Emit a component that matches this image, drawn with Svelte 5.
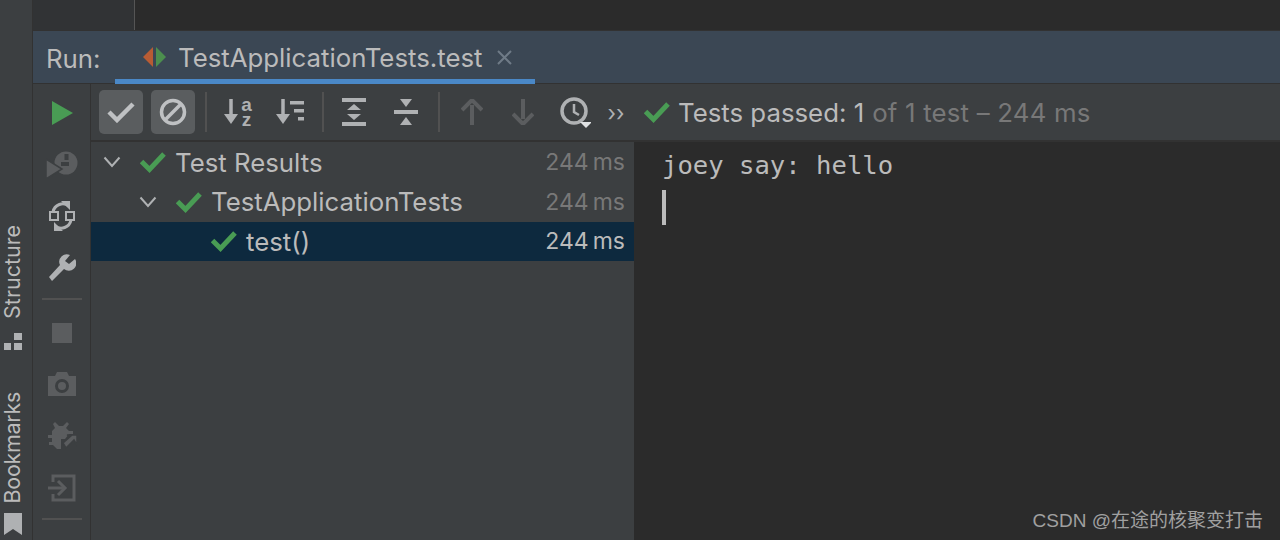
<script>
	const rows = [
		{ name: 'Test Results', depth: 0, arrow: true },
		{ name: 'TestApplicationTests', depth: 1, arrow: true },
		{ name: 'test()', depth: 2, arrow: false, selected: true }
	]
</script>

{#snippet check(size)}
	<svg class="check" width={size} height={size} viewBox="0 0 26 26">
		<path d="M1.5 12.5 L9.5 20.5 L24 5" fill="none" stroke="#499c54" stroke-width="5" />
	</svg>
{/snippet}

<div class="ide">
	<aside class="stripes">
		<div class="stripe structure">
			<span>Structure</span>
			<svg width="20" height="18" viewBox="0 0 20 18" fill="#afb1b3">
				<rect x="2" y="11" width="7" height="7" />
				<rect x="12" y="11" width="8" height="7" />
				<rect x="12" y="1" width="8" height="7" />
			</svg>
		</div>
		<div class="stripe bookmarks">
			<span>Bookmarks</span>
			<svg width="20" height="22" viewBox="0 0 20 22" fill="#afb1b3">
				<path d="M2 0 H20 V22 L11 16 L2 22 Z" />
			</svg>
		</div>
	</aside>

	<main class="main">
		<div class="editor">
			<div class="gutter"></div>
		</div>

		<header class="runbar">
			<span class="run-label">Run:</span>
			<div class="tab">
				<svg width="24" height="20" viewBox="0 0 24 20">
					<path d="M10 0 V20 L0 10 Z" fill="#b85c34" />
					<path d="M13 0 V20 L23 10 Z" fill="#4c8f4e" />
				</svg>
				<span class="tab-name">TestApplicationTests.test</span>
				<svg class="close" width="15" height="15" viewBox="0 0 15 15">
					<path d="M1 1 L14 14 M14 1 L1 14" stroke="#6f7b87" stroke-width="2" />
				</svg>
			</div>
		</header>

		<div class="panel">
			<nav class="actions">
				<button class="act">
					<svg width="22" height="24" viewBox="0 0 22 24"><path d="M1 0 L22 12 L1 24 Z" fill="#499c54" /></svg>
				</button>
				<button class="act">
					<svg width="32" height="28" viewBox="0 0 32 28" fill="#5b5d5f">
						<circle cx="20" cy="12" r="11.5" />
						<path d="M0 8 L16 18 L0 28 Z" stroke="#3c3f41" stroke-width="1.5" />
						<rect x="18.5" y="3" width="4" height="6" fill="#3c3f41" />
						<path d="M15 11 H23 V15 H15 Z" fill="#3c3f41" />
					</svg>
				</button>
				<button class="act">
					<svg width="26" height="32" viewBox="0 0 26 32">
						<path d="M4 12 A 10 10 0 0 1 20 6 M22 20 A 10 10 0 0 1 6 26" fill="none" stroke="#afb1b3" stroke-width="3" />
						<path d="M12 1 L21 1 L21 10 Z M14 31 L5 31 L5 22 Z" fill="#afb1b3" />
						<rect x="1" y="12" width="8" height="8" fill="#3c3f41" stroke="#afb1b3" stroke-width="2" />
						<rect x="17" y="12" width="8" height="8" fill="#3c3f41" stroke="#afb1b3" stroke-width="2" />
					</svg>
				</button>
				<button class="act">
					<svg width="28" height="28" viewBox="0 0 28 28">
						<path d="M1 23 L4 27 L16 15 A 7.5 7.5 0 0 0 27 5 L21 10 L17 7 L22 1 A 7.5 7.5 0 0 0 12 11 Z" fill="#afb1b3" />
					</svg>
				</button>
				<hr class="act-sep" />
				<button class="act">
					<svg width="20" height="20" viewBox="0 0 20 20"><rect width="20" height="20" fill="#5b5d5f" /></svg>
				</button>
				<button class="act">
					<svg width="28" height="24" viewBox="0 0 28 24">
						<path d="M0 4 H7 L9 0 H19 L21 4 H28 V24 H0 Z" fill="#5b5d5f" />
						<circle cx="14" cy="14" r="5.5" fill="none" stroke="#3c3f41" stroke-width="3" />
					</svg>
				</button>
				<button class="act">
					<svg width="30" height="30" viewBox="0 0 30 30" fill="#5b5d5f">
						<path d="M8 1 L12 5 H16 L20 1 L22 3 L19 7 L22 10 H26 V13 H22 L18 18 L14 18 L14 28 L10 28 L6 24 H2 V21 H5 V17 H1 V14 H5 V10 L8 7 L6 3 Z" />
						<path d="M16 22 L24 15 L20 14 H30 V24 L27 19 L19 27 Z" stroke="#3c3f41" stroke-width="1.5" />
					</svg>
				</button>
				<button class="act">
					<svg width="28" height="28" viewBox="0 0 28 28" fill="none" stroke="#5b5d5f" stroke-width="3">
						<path d="M5 8 V2 H26 V26 H5 V20" />
						<path d="M0 14 H16" />
						<path d="M10 7 L17 14 L10 21" />
					</svg>
				</button>
				<hr class="act-sep second" />
			</nav>

			<div class="content">
				<div class="toolbar">
					<button class="tool on">
						<svg width="28" height="22" viewBox="0 0 28 22"><path d="M2 11 L10 19 L26 3" fill="none" stroke="#bfc1c3" stroke-width="4.5" /></svg>
					</button>
					<button class="tool on">
						<svg width="28" height="28" viewBox="0 0 28 28" fill="none" stroke="#bfc1c3" stroke-width="3.5">
							<circle cx="14" cy="14" r="11.5" />
							<path d="M6 22 L22 6" />
						</svg>
					</button>
					<hr class="sep first" />
					<button class="tool">
						<svg width="15" height="26" viewBox="0 0 15 26" fill="#afb1b3">
							<path d="M7 0 V18" stroke="#afb1b3" stroke-width="3.5" />
							<path d="M0 15 H14 L7 25 Z" />
						</svg>
						<span class="sort">a
z</span>
					</button>
					<button class="tool">
						<svg width="28" height="26" viewBox="0 0 28 26" fill="#afb1b3">
							<path d="M7 0 V18" stroke="#afb1b3" stroke-width="3.5" />
							<path d="M0 15 H14 L7 25 Z" />
							<rect x="14" y="2" width="14" height="3.5" />
							<rect x="18" y="10" width="10" height="3.5" />
							<rect x="22" y="18" width="6" height="3.5" />
						</svg>
					</button>
					<hr class="sep" />
					<button class="tool">
						<svg width="26" height="28" viewBox="0 0 26 28" fill="#afb1b3">
							<rect width="24" height="4" x="1" y="0" />
							<rect width="24" height="4" x="1" y="24" />
							<path d="M13 6 L20 12 H6 Z M13 22 L20 16 H6 Z" />
						</svg>
					</button>
					<button class="tool">
						<svg width="26" height="28" viewBox="0 0 26 28" fill="#afb1b3">
							<rect width="24" height="4" x="1" y="12" />
							<path d="M7 1 H19 L13 9 Z M7 27 H19 L13 19 Z" />
						</svg>
					</button>
					<hr class="sep last" />
					<button class="tool">
						<svg width="22" height="26" viewBox="0 0 22 26">
							<path d="M11 26 V6" stroke="#5b5d5f" stroke-width="4" />
							<path d="M1 11 L11 1 L21 11" fill="none" stroke="#5b5d5f" stroke-width="4" />
						</svg>
					</button>
					<button class="tool down">
						<svg width="22" height="26" viewBox="0 0 22 26">
							<path d="M11 0 V20" stroke="#5b5d5f" stroke-width="4" />
							<path d="M1 15 L11 25 L21 15" fill="none" stroke="#5b5d5f" stroke-width="4" />
						</svg>
					</button>
					<button class="tool">
						<svg width="32" height="32" viewBox="0 0 32 32" fill="none" stroke="#afb1b3">
							<circle cx="15" cy="15" r="12" stroke-width="3.5" />
							<path d="M15 8 V16 L20 19" stroke-width="2.5" />
							<path d="M21 26 H33 L27 32 Z" fill="#dfe1e3" stroke="none" />
						</svg>
					</button>
					<span class="more">››</span>
					<div class="status">
						{@render check(26)}
						<span class="passed">Tests passed: 1</span>
						<span class="dim">of 1 test – 244 ms</span>
					</div>
				</div>

				<div class="split">
					<ul class="tree">
						{#each rows as row}
							<li class="row depth-{row.depth}" class:selected={row.selected}>
								{#if row.arrow}
									<svg class="arrow" width="18" height="12" viewBox="0 0 18 12">
										<path d="M1.5 1.5 L9 10 L16.5 1.5" fill="none" stroke="#afb1b3" stroke-width="2" />
									</svg>
								{/if}
								{@render check(26)}
								<span class="name">{row.name}</span>
								<span class="time">244<i>ms</i></span>
							</li>
						{/each}
					</ul>

					<div class="console">
						<div class="line">joey say: hello</div>
						<div class="caret"></div>
					</div>
				</div>
			</div>
		</div>
	</main>

	<div class="watermark">CSDN @在途的核聚变打击</div>
</div>

<style>
	:global(body) {
		background: #2b2b2b;
	}
	.ide {
		position: relative;
		display: flex;
		width: 1280px;
		height: 540px;
		overflow: hidden;
		font-family: Inter, "Liberation Sans", sans-serif;
		font-size: 25.8px;
		color: #bbbbbb;
		background: #2b2b2b;
	}
	button {
		display: flex;
		align-items: center;
		justify-content: center;
		padding: 0;
		border: 0;
		background: none;
	}
	hr {
		margin: 0;
		border: 0;
	}

	.stripes {
		flex: none;
		display: flex;
		flex-direction: column;
		align-items: flex-start;
		width: 30px;
		padding: 225px 0 0 2px;
		background: #3c3f41;
		border-right: 1px solid #323232;
	}
	.stripe {
		display: flex;
		flex-direction: column;
		align-items: flex-start;
		gap: 13px;
	}
	.stripe span {
		writing-mode: vertical-rl;
		transform: rotate(180deg);
		font-size: 21.5px;
		line-height: 20px;
	}
	.bookmarks {
		margin-top: 42px;
		gap: 10px;
	}
	.bookmarks span {
		letter-spacing: -0.3px;
	}

	.main {
		flex: 1;
		display: flex;
		flex-direction: column;
		min-width: 0;
	}
	.editor {
		flex: none;
		height: 31px;
		border-bottom: 1px solid #323232;
		box-sizing: border-box;
	}
	.gutter {
		width: 101px;
		height: 100%;
		background: #313335;
		border-right: 1px solid #555555;
	}

	.runbar {
		flex: none;
		display: flex;
		align-items: stretch;
		height: 53px;
		box-sizing: border-box;
		background: #3b4754;
		border-bottom: 1px solid #323232;
	}
	.run-label {
		width: 82px;
		padding-left: 13px;
		box-sizing: border-box;
		line-height: 55px;
	}
	.tab {
		display: flex;
		align-items: center;
		width: 420px;
		height: 53px;
		padding: 4px 0 0 28px;
		box-sizing: border-box;
		border-bottom: 5px solid #4a88c7;
	}
	.tab-name {
		margin-left: 11px;
	}
	.close {
		margin-left: 14px;
	}

	.panel {
		flex: 1;
		display: flex;
		min-height: 0;
	}
	.actions {
		flex: none;
		display: flex;
		flex-direction: column;
		align-items: center;
		width: 57px;
		padding-top: 3px;
		background: #3c3f41;
		border-right: 1px solid #323232;
	}
	.act {
		flex: none;
		width: 100%;
		height: 51.7px;
	}
	.act-sep {
		flex: none;
		width: 40px;
		height: 2px;
		margin: 4px 0 7px;
		background: #515151;
	}

	.content {
		flex: 1;
		display: flex;
		flex-direction: column;
		min-width: 0;
	}
	.toolbar {
		flex: none;
		display: flex;
		align-items: center;
		height: 58px;
		padding-left: 4px;
		box-sizing: border-box;
		background: #3c3f41;
		border-bottom: 2px solid #323232;
	}
	.tool {
		flex: none;
		width: 44px;
		height: 44px;
		margin: 0 4px;
		border-radius: 5px;
	}
	.tool.on {
		background: #5a5d5f;
	}
	.tool.down {
		margin-left: 3px;
	}
	.sep {
		flex: none;
		width: 2px;
		height: 40px;
		margin: 0 4px 0 6px;
		background: #515151;
	}
	.sep.first {
		margin-right: 5px;
	}
	.sep.last {
		margin-right: 6px;
	}
	.sort {
		margin-left: 2px;
		font-size: 19px;
		font-weight: 700;
		line-height: 15px;
		white-space: pre;
		color: #afb1b3;
	}
	.more {
		flex: none;
		width: 30px;
		padding-top: 1px;
		font-size: 22px;
		text-align: center;
		color: #afb1b3;
	}
	.status {
		display: flex;
		align-items: center;
		margin-left: 13px;
		white-space: nowrap;
	}
	.passed {
		margin-left: 8px;
	}
	.dim {
		margin-left: 8px;
		letter-spacing: 0.2px;
		color: #787878;
	}

	.split {
		flex: 1;
		display: flex;
		min-height: 0;
	}
	.tree {
		flex: none;
		width: 543px;
		margin: 0;
		padding: 0.5px 0 0;
		list-style: none;
		background: #3c3f41;
		box-sizing: border-box;
	}
	.row {
		display: flex;
		align-items: center;
		height: 39.5px;
		padding-right: 9px;
		white-space: nowrap;
	}
	.row.selected {
		background: #0d293e;
	}
	.depth-0 {
		padding-left: 12px;
	}
	.depth-1 {
		padding-left: 48px;
	}
	.depth-2 {
		padding-left: 120px;
	}
	.arrow {
		margin-right: 19px;
	}
	.name {
		margin-left: 9px;
	}
	.time {
		margin-left: auto;
		font-size: 23px;
		color: #787878;
	}
	.time i {
		margin-left: 4px;
		font-style: normal;
	}
	.selected .time {
		color: #bbbbbb;
	}

	.console {
		flex: 1;
		margin-left: 1px;
		padding: 6px 0 0 27px;
		background: #2b2b2b;
		font-family: "DejaVu Sans Mono", monospace;
		font-size: 25.6px;
	}
	.line {
		line-height: 34px;
	}
	.caret {
		width: 4px;
		height: 35px;
		margin-top: 8px;
		background: #bbbbbb;
	}

	.watermark {
		position: absolute;
		right: 17px;
		bottom: 7px;
		font-family: "Liberation Sans", "Noto Sans CJK SC", sans-serif;
		font-size: 19px;
		line-height: 24px;
		color: #a0a0a0;
	}
</style>
